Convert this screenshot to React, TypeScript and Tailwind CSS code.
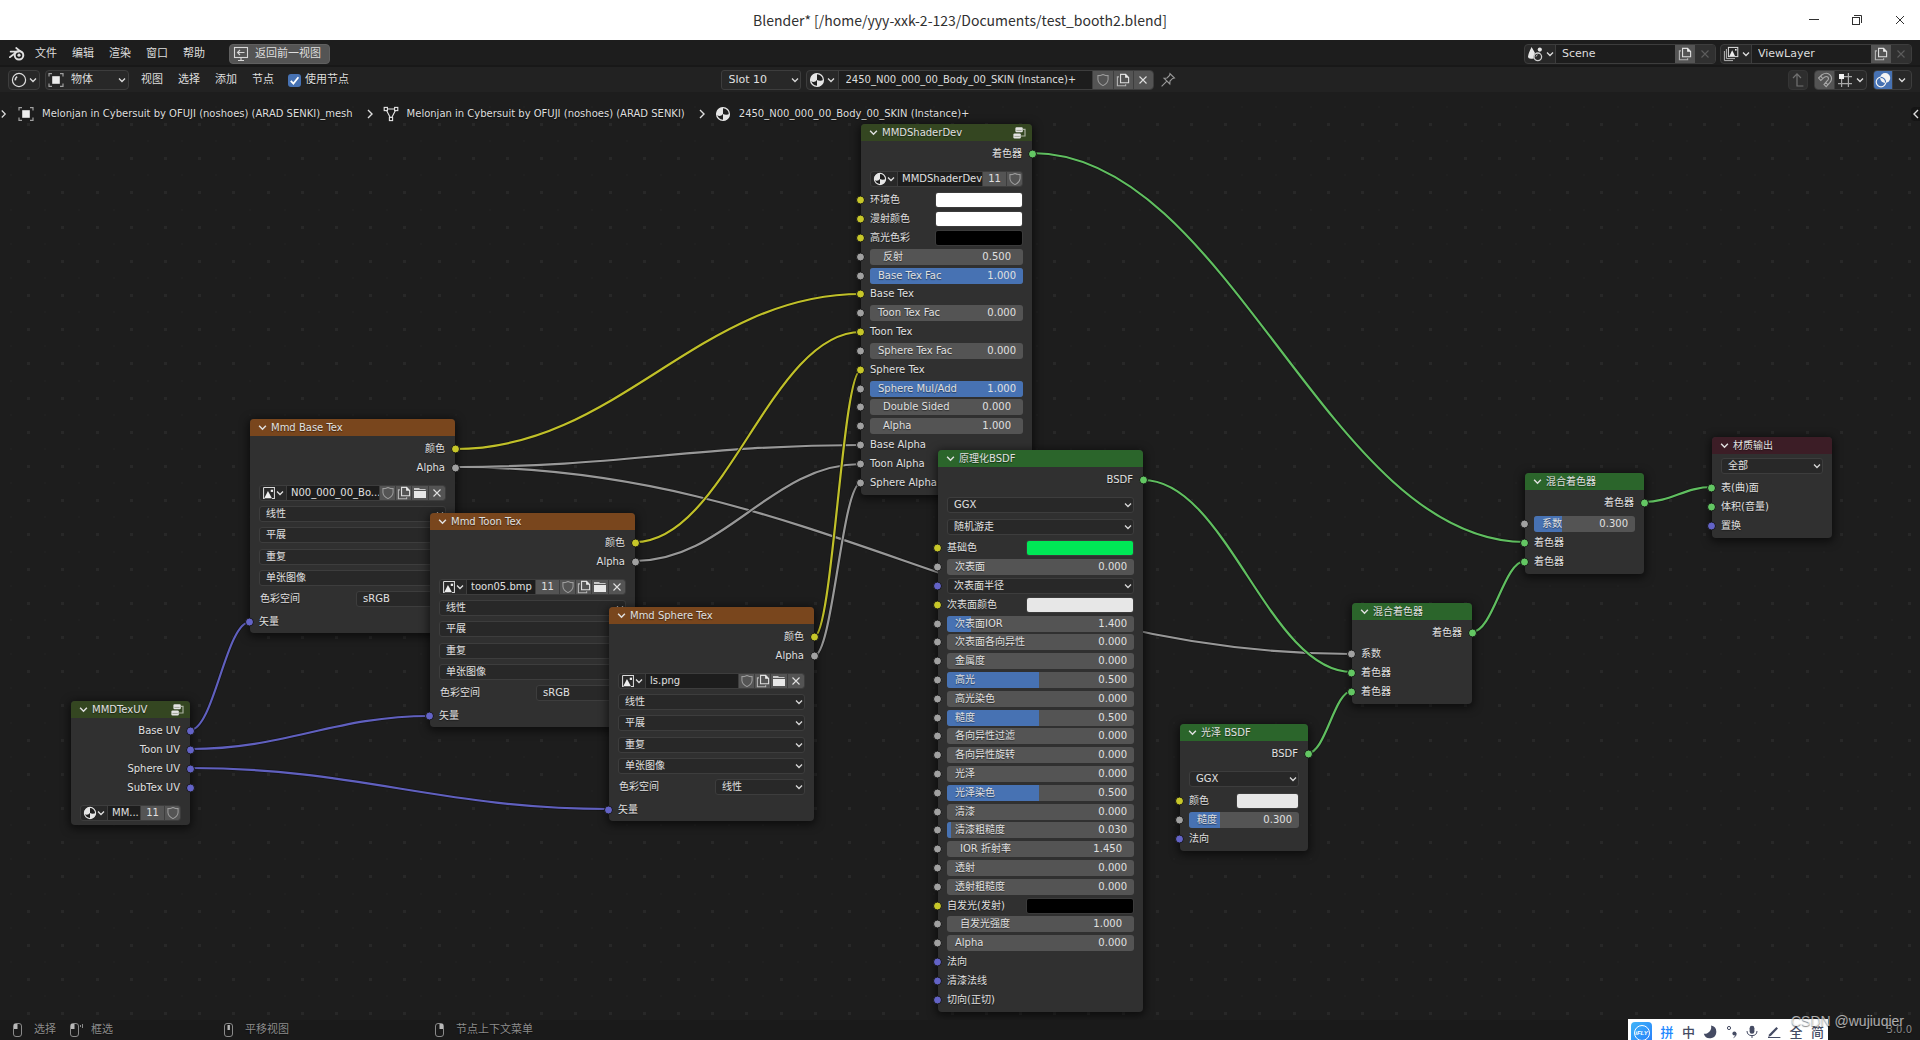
import React from 'react';

const SOCKET = {
  yellow: 'bg-[#c7c729]',
  grey: 'bg-[#a1a1a1]',
  violet: 'bg-[#6363c7]',
  green: 'bg-[#63c763]',
} as const;

const STROKE = {
  yellow: '#c0c029',
  grey: '#989898',
  violet: '#6060bf',
  green: '#60bf60',
} as const;

type Hue = keyof typeof SOCKET;

/* ---------- icons ---------- */

function Chevron({ className = 'w-2 h-2' }: { className?: string }) {
  return (
    <svg viewBox="0 0 8 8" className={className} fill="none" stroke="currentColor" strokeWidth="1.3" aria-hidden="true">
      <path d="M1 2.5 L4 5.5 L7 2.5" />
    </svg>
  );
}

function ChevronRight({ className = 'h-3 w-2' }: { className?: string }) {
  return (
    <svg viewBox="0 0 8 12" className={className} fill="none" stroke="currentColor" strokeWidth="1.4" aria-hidden="true">
      <path d="M2 2 L6 6 L2 10" />
    </svg>
  );
}

function BlenderLogo() {
  return (
    <svg viewBox="0 0 16 14" className="h-[14px] w-4" fill="none" stroke="#e0e0e0" aria-hidden="true">
      <circle cx="10" cy="8.2" r="4.3" strokeWidth="2" />
      <circle cx="10" cy="8.2" r="1.6" fill="#e0e0e0" stroke="none" />
      <path d="M7.2 1 L13.4 5.8 M1.6 4.6 H10 M0.8 10.2 L8 4.8" strokeWidth="1.7" strokeLinecap="round" />
    </svg>
  );
}

function BackIcon() {
  return (
    <svg viewBox="0 0 16 16" className="h-4 w-4" fill="none" stroke="#d8d8d8" strokeWidth="1.1" aria-hidden="true">
      <rect x="1.5" y="1.5" width="13" height="10" />
      <path d="M11.5 6.5 H4.5 M7 4 L4.5 6.5 L7 9 M8 12 V14.5 M5 14.5 H11" />
    </svg>
  );
}

function EditorBall() {
  return (
    <svg viewBox="0 0 16 16" className="h-4 w-4" fill="none" stroke="#dedede" strokeWidth="1.2" aria-hidden="true">
      <circle cx="8" cy="8" r="6.6" />
      <path d="M4.4 8.4 A3.8 3.8 0 0 1 6.2 4.6" strokeWidth="1.6" />
    </svg>
  );
}

function ObjectIcon() {
  return (
    <svg viewBox="0 0 16 16" className="h-4 w-4" fill="none" stroke="#a0a0a0" strokeWidth="1.2" aria-hidden="true">
      <rect x="4.2" y="4.2" width="7.6" height="7.6" fill="#eeeeee" stroke="none" />
      <path d="M1 4.5 V1.6 H4 M12 1.6 H15 V4.5 M15 11.5 V14.4 H12 M4 14.4 H1 V11.5" />
    </svg>
  );
}

function MeshIcon() {
  return (
    <svg viewBox="0 0 16 16" className="h-4 w-4" fill="none" stroke="#e6e6e6" strokeWidth="1.1" aria-hidden="true">
      <path d="M4.5 3 H11.5 M3.6 4.6 L7.2 11.5 M12.4 4.6 L8.8 11.5" />
      <rect x="1.2" y="1.4" width="3.2" height="3.2" />
      <rect x="11.6" y="1.4" width="3.2" height="3.2" />
      <rect x="6.4" y="11.4" width="3.2" height="3.2" />
    </svg>
  );
}

function MaterialIcon({ className = 'h-4 w-4' }: { className?: string }) {
  return (
    <svg viewBox="0 0 16 16" className={className} aria-hidden="true">
      <circle cx="8" cy="8" r="6.4" fill="#1f1f1f" stroke="#e6e6e6" strokeWidth="1.3" />
      <path d="M8 8 V1.4 A6.6 6.6 0 0 0 1.4 8 Q1.8 9.6 4 10 Q6.4 10.2 8 8 Z" fill="#e6e6e6" />
      <path d="M8 8 Q11 9.6 14.6 8 A6.6 6.6 0 0 1 8 14.6 Z" fill="#e6e6e6" />
    </svg>
  );
}

function ImageIcon({ className = 'h-4 w-4' }: { className?: string }) {
  return (
    <svg viewBox="0 0 16 16" className={className} aria-hidden="true">
      <path d="M1.8 1.8 H14.2 V14.2 H11.5 M1.8 1.8 V14.2 H3" fill="none" stroke="#d8d8d8" strokeWidth="1.2" />
      <path d="M2.6 14 L6.8 5.6 L11.4 14 Z" fill="#eeeeee" />
      <rect x="10" y="4.2" width="2.6" height="2.6" fill="#eeeeee" />
    </svg>
  );
}

function ShieldIcon() {
  return (
    <svg viewBox="0 0 16 16" className="h-[14px] w-[14px] shrink-0" fill="none" stroke="#9c9c9c" strokeWidth="1.2" aria-hidden="true">
      <path d="M8 1.6 Q5 3 2.2 3 V7.4 Q2.6 11.8 8 14.4 Q13.4 11.8 13.8 7.4 V3 Q11 3 8 1.6 Z" />
    </svg>
  );
}

function CopyIcon() {
  return (
    <svg viewBox="0 0 16 16" className="h-[14px] w-[14px] shrink-0" fill="none" stroke="#dddddd" strokeWidth="1.3" aria-hidden="true">
      <path d="M5.2 1.6 H11 L14.4 5 V11.2 H5.2 Z" />
      <path d="M10.4 1.2 V5.4 H14.8 Z" fill="#eeeeee" stroke="none" />
      <path d="M3.4 4.4 H1.6 V14.6 H11 V12.8" stroke="#b4b4b4" />
    </svg>
  );
}

function FolderIcon() {
  return (
    <svg viewBox="0 0 14 14" className="h-[14px] w-[14px] shrink-0" fill="#e8e8e8" aria-hidden="true">
      <path d="M1 4 V2 H6 L7 3 H12.6 V4 Z" fill="#c8c8c8" />
      <path d="M1 5 H13 V12 H1 Z" />
    </svg>
  );
}

function CrossIcon() {
  return (
    <svg viewBox="0 0 10 10" className="h-[10px] w-[10px] shrink-0" fill="none" stroke="currentColor" strokeWidth="1.1" aria-hidden="true">
      <path d="M1.5 1.5 L8.5 8.5 M8.5 1.5 L1.5 8.5" />
    </svg>
  );
}

function PinIcon() {
  return (
    <svg viewBox="0 0 16 16" className="h-4 w-4" fill="none" stroke="#9a9a9a" strokeWidth="1.1" aria-hidden="true">
      <path d="M10 1.6 L14.4 6 L12.6 6.4 L10 9 L9.8 12 L4 6.2 L7 6 L9.6 3.4 Z M6.6 9.4 L1.6 14.4" />
    </svg>
  );
}

function GroupIcon() {
  return (
    <svg viewBox="0 0 13 12" className="h-3 w-[13px]" fill="none" aria-hidden="true">
      <rect x="2.4" y="0.2" width="7.4" height="5" rx="1.2" fill="#e4e4e4" />
      <rect x="0.4" y="6.4" width="7.4" height="5" rx="1.2" fill="#e4e4e4" />
      <path d="M9.8 2.4 H12 V9 H7.8" stroke="#a9b09f" strokeWidth="1.2" />
      <path d="M3.4 3.4 H8.6 M1.4 9.4 H6.8" stroke="#8b9380" strokeWidth="0.8" />
    </svg>
  );
}

function SceneIcon() {
  return (
    <svg viewBox="0 0 16 16" className="h-4 w-4" aria-hidden="true">
      <path d="M4.6 1 L8 7 Q6.4 9.4 6.8 12.4 Q1.2 13.4 1 11 Q1 8 4.6 1 Z" fill="#e6e6e6" />
      <circle cx="12.8" cy="3.6" r="2.1" fill="#e6e6e6" />
      <circle cx="10.8" cy="10.8" r="3.8" fill="none" stroke="#cfcfcf" strokeWidth="1.3" />
      <path d="M9 10.6 A2 2 0 0 1 10.6 8.8" stroke="#cfcfcf" fill="none" />
    </svg>
  );
}

function LayersIcon() {
  return (
    <svg viewBox="0 0 16 16" className="h-4 w-4" fill="none" aria-hidden="true">
      <path d="M1.4 5 V14.6 H10 M3.4 3 V12.6 H12" stroke="#b4b4b4" />
      <rect x="5.4" y="1.4" width="9.4" height="9.2" stroke="#e0e0e0" />
      <path d="M6.4 10 L9.2 4.2 L12 10 Z" fill="#eeeeee" />
      <rect x="12" y="3" width="1.6" height="1.6" fill="#eeeeee" />
    </svg>
  );
}

function ParentIcon() {
  return (
    <svg viewBox="0 0 16 16" className="h-4 w-4" fill="none" stroke="#727272" strokeWidth="1.2" aria-hidden="true">
      <path d="M3 6 L7 1.8 L11 6 M7 2 V14 H13.4" />
    </svg>
  );
}

function MagnetIcon() {
  return (
    <svg viewBox="0 0 16 16" className="h-4 w-4" fill="none" stroke="#a8a8a8" strokeWidth="1.1" aria-hidden="true">
      <path d="M1.6 6 L5 2.8 Q9.8 -0.4 13.2 3.2 Q16 6.6 13 10.4 L9.2 14.6 L7 12.4 L10.8 8.2 Q12.2 6.4 10.8 5 Q9.4 3.8 7.4 5.2 L3.8 8.4 Z M3.6 4.2 L5.8 6.6 M8.6 10.4 L11 12.8" />
    </svg>
  );
}

function SnapGridIcon() {
  return (
    <svg viewBox="0 0 16 16" className="h-4 w-4" fill="none" stroke="#a8a8a8" strokeWidth="1.2" aria-hidden="true">
      <path d="M11.4 1 V15 M4.6 7 V15 M1 11.6 H15 M7 4.6 H15" />
      <rect x="2" y="2" width="5" height="5" fill="#f0f0f0" stroke="none" />
    </svg>
  );
}

function OverlayIcon() {
  return (
    <svg viewBox="0 0 16 16" className="h-4 w-4" fill="none" aria-hidden="true">
      <circle cx="10.2" cy="6" r="5" fill="#f4f4f4" />
      <circle cx="6" cy="10" r="4.8" stroke="#f4f4f4" strokeWidth="1.2" />
      <path d="M5.6 5.4 A4.8 4.8 0 0 1 10.6 10.4" stroke="#4772b3" strokeWidth="1.1" />
    </svg>
  );
}

function MouseIcon({ kind }: { kind: 'left' | 'drag' | 'middle' | 'right' }) {
  return (
    <svg viewBox="0 0 16 16" className="h-4 w-4" fill="none" stroke="#8a8a8a" aria-hidden="true">
      <rect x="3.5" y="1.5" width="8" height="13" rx="2.5" />
      {(kind === 'left' || kind === 'drag') && <path d="M4 2 H7.5 V7 H4 Z" fill="#b8b8b8" stroke="none" />}
      {kind === 'middle' && <rect x="6.5" y="3" width="2.4" height="5" fill="#b8b8b8" stroke="none" />}
      {kind === 'right' && <path d="M7.5 2 H11 V7 H7.5 Z" fill="#b8b8b8" stroke="none" />}
      {kind === 'drag' && <path d="M13.5 3 V5 M15.5 2 V6" />}
    </svg>
  );
}

/* ---------- controls ---------- */

function DropDown({ value, label, size = 'node', className = 'w-full' }: { value: string; label: string; size?: 'node' | 'bar'; className?: string }) {
  return (
    <div className={'relative ' + className}>
      <select
        aria-label={label}
        defaultValue={value}
        className={
          'block w-full appearance-none rounded-[3px] border border-[#3d3d3d] bg-[#282828] pr-4 text-[#e0e0e0] ' +
          (size === 'node' ? 'h-4 pl-[6px] leading-[14px]' : 'h-5 pl-[7px] leading-[18px]')
        }
      >
        <option>{value}</option>
      </select>
      <Chevron className="pointer-events-none absolute right-[2px] top-1/2 h-2 w-2 -translate-y-1/2 text-[#d8d8d8]" />
    </div>
  );
}

function NumberField({ name, value, fill, bounded = true }: { name: string; value: string; fill?: number; bounded?: boolean }) {
  return (
    <label
      className={
        'relative flex h-4 w-full items-center justify-between overflow-hidden rounded-[3px] bg-[#545454] ' +
        (bounded ? 'pl-2 pr-[7px]' : 'pl-[13px] pr-3')
      }
    >
      {fill !== undefined && <span className="absolute inset-y-0 left-0 bg-[#4772b3]" style={{ width: `${fill}%` }} />}
      <span className="relative whitespace-nowrap">{name}</span>
      <input type="text" defaultValue={value} className="relative h-[14px] w-10 bg-transparent text-right outline-none" />
    </label>
  );
}

type Input = {
  hue: Hue;
  name: string;
  value?: string;
  fill?: number;
  unbounded?: boolean;
  color?: string;
  select?: boolean;
};

function Socket({ hue, side }: { hue: Hue; side: 'left' | 'right' }) {
  return (
    <span
      className={
        'absolute top-1/2 h-[9px] w-[9px] -translate-y-1/2 rounded-full border border-[#181818] ' +
        SOCKET[hue] +
        (side === 'left' ? ' -left-[5px]' : ' -right-[5px]')
      }
    />
  );
}

function InputRow({ row }: { row: Input }) {
  let body: React.ReactNode = <span>{row.name}</span>;
  if (row.color) {
    body = (
      <label className="grid w-full grid-cols-[11fr_15fr] items-center">
        <span className="whitespace-nowrap">{row.name}</span>
        <input
          type="color"
          defaultValue={row.color}
          className="block h-4 w-full appearance-none overflow-hidden rounded-[3px] border border-[#3b3b3b] bg-transparent p-0 [&::-webkit-color-swatch-wrapper]:p-0 [&::-webkit-color-swatch]:border-0"
        />
      </label>
    );
  } else if (row.select) {
    body = <DropDown value={row.name} label={row.name} />;
  } else if (row.value) {
    body = <NumberField name={row.name} value={row.value} fill={row.fill} bounded={!row.unbounded} />;
  }
  return (
    <div className="relative flex items-center px-[9px]">
      <Socket hue={row.hue} side="left" />
      {body}
    </div>
  );
}

function Inputs({ rows, className }: { rows: Input[]; className: string }) {
  return (
    <div className={'grid auto-rows-fr ' + className}>
      {rows.map((row, i) => (
        <InputRow key={i} row={row} />
      ))}
    </div>
  );
}

function Outputs({ rows }: { rows: [string, Hue][] }) {
  return (
    <div className="pt-[3px]">
      {rows.map(([name, hue]) => (
        <div key={name} className="relative flex h-[19px] items-center justify-end pr-[10px]">
          {name}
          <Socket hue={hue} side="right" />
        </div>
      ))}
    </div>
  );
}

function IdButton({ label, className, children }: { label: string; className: string; children: React.ReactNode }) {
  return (
    <button type="button" aria-label={label} className={'flex shrink-0 items-center justify-center border-l border-[#3d3d3d] bg-[#545454] ' + className}>
      {children}
    </button>
  );
}

function NodeId({ icon, name, users, file = false }: { icon: React.ReactNode; name: string; users?: string; file?: boolean }) {
  return (
    <div className="mx-[9px] mt-2 flex h-4 overflow-hidden rounded-[3px] border border-[#3d3d3d] bg-[#282828]">
      <button type="button" aria-label="浏览" className="flex w-[26px] shrink-0 items-center justify-center">
        {icon}
        <Chevron className="h-2 w-2" />
      </button>
      <input
        type="text"
        aria-label="名称"
        defaultValue={name}
        className="w-0 min-w-0 flex-1 border-l border-[#3d3d3d] bg-[#1d1d1d] pl-1 outline-none"
      />
      {users && <IdButton label="用户数" className="w-6">{users}</IdButton>}
      <IdButton label="伪用户" className="w-4"><ShieldIcon /></IdButton>
      {file && (
        <>
          <IdButton label="新建" className="w-4"><CopyIcon /></IdButton>
          <IdButton label="打开" className="w-[17px]"><FolderIcon /></IdButton>
          <IdButton label="断开" className="w-[17px]"><CrossIcon /></IdButton>
        </>
      )}
    </div>
  );
}

function Node({ x, y, width, header, title, group = false, children }: {
  x: number;
  y: number;
  width: number;
  header: string;
  title: string;
  group?: boolean;
  children: React.ReactNode;
}) {
  return (
    <section
      aria-label={title}
      className="absolute rounded-[4px] bg-[#303030] shadow-[0_2px_8px_2px_rgba(0,0,0,0.55)]"
      style={{ left: x, top: y, width }}
    >
      <header className={'flex h-[17px] items-center gap-1 rounded-t-[4px] pl-2 pr-[6px] ' + header}>
        <button type="button" aria-label="折叠" className="flex shrink-0">
          <Chevron className="h-[9px] w-[9px]" />
        </button>
        <h2 className="flex-1 whitespace-nowrap">{title}</h2>
        {group && <GroupIcon />}
      </header>
      {children}
    </section>
  );
}

const TEXTURE = 'bg-[#79461d]';
const SHADER = 'bg-[#2b652b]';
const GROUP = 'bg-[#344621]';
const OUTPUT = 'bg-[#3c1d26]';

function TextureNode({ x, y, title, file, users, space }: { x: number; y: number; title: string; file: string; users?: string; space: string }) {
  return (
    <Node x={x} y={y} width={205} header={TEXTURE} title={title}>
      <Outputs rows={[['颜色', 'yellow'], ['Alpha', 'grey']]} />
      <NodeId icon={<ImageIcon className="h-[14px] w-[14px]" />} name={file} users={users} file />
      <div className="flex flex-col gap-[5px] px-[9px] pt-[5px]">
        <DropDown value="线性" label="插值" />
        <DropDown value="平展" label="投射" />
      </div>
      <div className="flex flex-col gap-[5px] px-[9px] pb-[5px] pt-[6px]">
        <DropDown value="重复" label="扩展" />
        <DropDown value="单张图像" label="源" />
        <div className="flex items-center justify-between">
          <span className="pl-px">色彩空间</span>
          <DropDown value={space} label="色彩空间" className="w-[90px]" />
        </div>
      </div>
      <Inputs rows={[{ hue: 'violet', name: '矢量' }]} className="mb-[2px] h-[19px]" />
    </Node>
  );
}

const TOON_INPUTS: Input[] = [
  { hue: 'yellow', name: '环境色', color: '#ffffff' },
  { hue: 'yellow', name: '漫射颜色', color: '#ffffff' },
  { hue: 'yellow', name: '高光色彩', color: '#000000' },
  { hue: 'grey', name: '反射', value: '0.500', unbounded: true },
  { hue: 'grey', name: 'Base Tex Fac', value: '1.000', fill: 100 },
  { hue: 'yellow', name: 'Base Tex' },
  { hue: 'grey', name: 'Toon Tex Fac', value: '0.000' },
  { hue: 'yellow', name: 'Toon Tex' },
  { hue: 'grey', name: 'Sphere Tex Fac', value: '0.000' },
  { hue: 'yellow', name: 'Sphere Tex' },
  { hue: 'grey', name: 'Sphere Mul/Add', value: '1.000', fill: 100 },
  { hue: 'grey', name: 'Double Sided', value: '0.000', unbounded: true },
  { hue: 'grey', name: 'Alpha', value: '1.000', unbounded: true },
  { hue: 'grey', name: 'Base Alpha' },
  { hue: 'grey', name: 'Toon Alpha' },
  { hue: 'grey', name: 'Sphere Alpha' },
];

const PRINCIPLED_INPUTS: Input[] = [
  { hue: 'yellow', name: '基础色', color: '#00e756' },
  { hue: 'grey', name: '次表面', value: '0.000' },
  { hue: 'violet', name: '次表面半径', select: true },
  { hue: 'yellow', name: '次表面颜色', color: '#e7e7e7' },
  { hue: 'grey', name: '次表面IOR', value: '1.400', fill: 13 },
  { hue: 'grey', name: '次表面各向异性', value: '0.000' },
  { hue: 'grey', name: '金属度', value: '0.000' },
  { hue: 'grey', name: '高光', value: '0.500', fill: 49 },
  { hue: 'grey', name: '高光染色', value: '0.000' },
  { hue: 'grey', name: '糙度', value: '0.500', fill: 49 },
  { hue: 'grey', name: '各向异性过滤', value: '0.000' },
  { hue: 'grey', name: '各向异性旋转', value: '0.000' },
  { hue: 'grey', name: '光泽', value: '0.000' },
  { hue: 'grey', name: '光泽染色', value: '0.500', fill: 49 },
  { hue: 'grey', name: '清漆', value: '0.000' },
  { hue: 'grey', name: '清漆粗糙度', value: '0.030', fill: 2 },
  { hue: 'grey', name: 'IOR 折射率', value: '1.450', unbounded: true },
  { hue: 'grey', name: '透射', value: '0.000' },
  { hue: 'grey', name: '透射粗糙度', value: '0.000' },
  { hue: 'yellow', name: '自发光(发射)', color: '#000000' },
  { hue: 'grey', name: '自发光强度', value: '1.000', unbounded: true },
  { hue: 'grey', name: 'Alpha', value: '0.000' },
  { hue: 'violet', name: '法向' },
  { hue: 'violet', name: '清漆法线' },
  { hue: 'violet', name: '切向(正切)' },
];

const LINKS: [number, number, number, number, Hue][] = [
  [190, 638, 250, 530, 'violet'],
  [190, 657, 430, 624, 'violet'],
  [190, 676, 609, 717, 'violet'],
  [455, 375, 1352, 562, 'grey'],
  [455, 375, 861, 353, 'grey'],
  [455, 357, 861, 202, 'yellow'],
  [635, 450, 861, 240, 'yellow'],
  [635, 469, 861, 372, 'grey'],
  [814, 545, 861, 278, 'yellow'],
  [814, 564, 861, 391, 'grey'],
  [1143, 388, 1352, 580, 'green'],
  [1308, 661, 1352, 599, 'green'],
  [1032, 61, 1525, 450, 'green'],
  [1472, 540, 1525, 469, 'green'],
  [1644, 410, 1712, 395, 'green'],
];

const CURVING = 0.4;

function Backdrop() {
  const dots: string[] = [];
  const faint: string[] = [];
  for (let j = 0; j < 28; j++) {
    for (let i = 0; i < 58; i++) {
      const x = Math.round(-7 + i * 34.2);
      const y = Math.round(31 + j * 34.2);
      dots.push(`M${x} ${y}h3v3h-3z`);
      faint.push(`M${x + 17} ${y - 17}h2v2h-2z`);
    }
  }
  return (
    <svg className="absolute inset-0 h-full w-full" aria-hidden="true">
      <path d={faint.join('')} fill="#202020" />
      <path d={dots.join('')} fill="#282828" />
      {LINKS.map(([x1, y1, x2, y2, hue], i) => {
        const h = Math.abs(x2 - x1) * CURVING;
        const d = `M${x1} ${y1} C${x1 + h} ${y1} ${x2 - h} ${y2} ${x2} ${y2}`;
        return (
          <g key={i} fill="none">
            <path d={d} stroke="#141414" strokeWidth="3.6" />
            <path d={d} stroke={STROKE[hue]} strokeWidth="2.2" />
          </g>
        );
      })}
    </svg>
  );
}

/* ---------- window bars ---------- */

function TitleBar() {
  return (
    <header className="grid h-10 shrink-0 grid-cols-[1fr_auto_1fr] items-center bg-white text-[#303030]">
      <span />
      <h1 className="font-['Noto_Sans_CJK_SC',sans-serif] text-[14px] leading-5">Blender* [/home/yyy-xxk-2-123/Documents/test_booth2.blend]</h1>
      <div className="flex items-center justify-end gap-[31px] pr-[14px]">
        <button type="button" aria-label="最小化">
          <svg viewBox="0 0 12 12" className="h-3 w-3" stroke="#303030"><path d="M1 5.5 H11" /></svg>
        </button>
        <button type="button" aria-label="还原">
          <svg viewBox="0 0 12 12" className="h-3 w-3" fill="none" stroke="#303030">
            <rect x="1.5" y="3.5" width="7" height="7" />
            <path d="M3 1.5 H10.5 V9" />
          </svg>
        </button>
        <button type="button" aria-label="关闭">
          <svg viewBox="0 0 12 12" className="h-3 w-3" stroke="#303030"><path d="M2 2 L10 10 M10 2 L2 10" /></svg>
        </button>
      </div>
    </header>
  );
}

function BarId({ icon, name }: { icon: React.ReactNode; name: string }) {
  return (
    <div className="flex h-5 overflow-hidden rounded-[4px] border border-[#3d3d3d] bg-[#282828]">
      <button type="button" aria-label="浏览" className="flex w-[30px] items-center justify-center gap-[3px] pl-px">
        {icon}
        <Chevron />
      </button>
      <input type="text" aria-label="名称" defaultValue={name} className="w-[120px] border-l border-[#3d3d3d] bg-[#1d1d1d] pl-[6px] outline-none" />
      <button type="button" aria-label="新建" className="flex w-5 items-center justify-center bg-[#545454]">
        <CopyIcon />
      </button>
      <button type="button" aria-label="移除" className="flex w-5 items-center justify-center bg-[#303030] text-[#5c5c5c]">
        <CrossIcon />
      </button>
    </div>
  );
}

function TopBar() {
  return (
    <nav className="flex h-[27px] shrink-0 items-center border-b-2 border-[#181818] bg-[#1d1d1d] pl-[9px] pr-2 pt-[2px]">
      <BlenderLogo />
      <div className="ml-[10px] flex items-center gap-[15px]">
        {['文件', '编辑', '渲染', '窗口', '帮助'].map((t) => (
          <button type="button" key={t}>{t}</button>
        ))}
      </div>
      <button type="button" className="ml-6 flex h-5 items-center gap-[6px] rounded-[4px] border border-[#606060] bg-[#545454] pl-[3px] pr-2">
        <BackIcon />
        返回前一视图
      </button>
      <div className="ml-auto flex gap-1">
        <BarId icon={<SceneIcon />} name="Scene" />
        <BarId icon={<LayersIcon />} name="ViewLayer" />
      </div>
    </nav>
  );
}

function EditorHeader() {
  return (
    <div className="flex h-[25px] shrink-0 items-center bg-[#222222] pl-2 pr-2 pt-px">
      <div className="flex flex-1 items-center">
        <button type="button" aria-label="编辑器类型" className="flex h-5 w-8 items-center justify-center gap-[2px] rounded-[4px] border border-[#3d3d3d] bg-[#282828]">
          <EditorBall />
          <Chevron />
        </button>
        <div className="relative ml-[5px] w-[84px]">
          <select
            aria-label="着色器类型"
            defaultValue="物体"
            className="block h-5 w-full appearance-none rounded-[4px] border border-[#3d3d3d] bg-[#282828] pl-[25px] leading-[18px]"
          >
            <option>物体</option>
          </select>
          <span className="pointer-events-none absolute left-[3px] top-[2px]"><ObjectIcon /></span>
          <Chevron className="pointer-events-none absolute right-[3px] top-[6px] h-2 w-2" />
        </div>
        <div className="ml-3 flex gap-[15px]">
          {['视图', '选择', '添加', '节点'].map((t) => (
            <button type="button" key={t}>{t}</button>
          ))}
        </div>
        <label className="ml-[14px] flex items-center gap-1 whitespace-nowrap">
          <span className="relative flex h-[13px] w-[13px]">
            <input type="checkbox" defaultChecked className="h-[13px] w-[13px] appearance-none rounded-[3px] bg-[#4772b3]" />
            <svg viewBox="0 0 13 13" className="pointer-events-none absolute inset-0" fill="none" stroke="white" strokeWidth="1.8" aria-hidden="true">
              <path d="M2.8 6.8 L5.4 9.6 L10.4 3.2" />
            </svg>
          </span>
          使用节点
        </label>
      </div>

      <div className="mr-6 flex items-center">
        <DropDown value="Slot 10" label="材质槽" size="bar" className="w-20" />
        <div className="ml-[5px] flex h-5 overflow-hidden rounded-[4px] border border-[#3d3d3d] bg-[#282828]">
          <button type="button" aria-label="浏览材质" className="flex w-[31px] items-center justify-center gap-[2px]">
            <MaterialIcon />
            <Chevron />
          </button>
          <input
            type="text"
            aria-label="材质名称"
            defaultValue="2450_N00_000_00_Body_00_SKIN (Instance)+"
            className="w-[254px] border-l border-[#3d3d3d] bg-[#1d1d1d] pl-[7px] text-[10px] outline-none"
          />
          <IdButton label="伪用户" className="w-[21px]"><ShieldIcon /></IdButton>
          <IdButton label="新建" className="w-5"><CopyIcon /></IdButton>
          <IdButton label="断开" className="w-5"><CrossIcon /></IdButton>
        </div>
        <button type="button" aria-label="固定" className="ml-[6px]"><PinIcon /></button>
      </div>

      <div className="flex flex-1 items-center justify-end gap-[6px]">
        <button type="button" aria-label="上一级" className="flex h-5 w-5 items-center justify-center rounded-[4px] border border-[#353535] bg-[#2e2e2e]">
          <ParentIcon />
        </button>
        <div className="flex h-5 overflow-hidden rounded-[4px] border border-[#3d3d3d] bg-[#282828]">
          <button type="button" aria-label="吸附" className="flex w-[19px] items-center justify-center bg-[#545454]"><MagnetIcon /></button>
          <button type="button" aria-label="吸附选项" className="flex w-8 items-center justify-center gap-[3px] border-l border-[#3d3d3d]">
            <SnapGridIcon />
            <Chevron />
          </button>
        </div>
        <div className="flex h-5 overflow-hidden rounded-[4px] border border-[#3d3d3d] bg-[#282828]">
          <button type="button" aria-label="叠加层" className="flex w-[18px] items-center justify-center bg-[#4772b3]"><OverlayIcon /></button>
          <button type="button" aria-label="叠加层选项" className="flex w-[19px] items-center justify-center border-l border-[#3d3d3d]"><Chevron /></button>
        </div>
      </div>
    </div>
  );
}

function Breadcrumb() {
  return (
    <div className="absolute inset-x-0 top-[11px] flex h-[22px] items-center whitespace-nowrap text-[10px]">
      <button type="button" aria-label="展开工具栏" className="flex h-[14px] w-[7px] items-center justify-center"><ChevronRight /></button>
      <span className="ml-[11px]"><ObjectIcon /></span>
      <span className="ml-2">Melonjan in Cybersuit by OFUJI (noshoes) (ARAD SENKI)_mesh</span>
      <span className="ml-[13px]"><ChevronRight /></span>
      <span className="ml-[9px]"><MeshIcon /></span>
      <span className="ml-2">Melonjan in Cybersuit by OFUJI (noshoes) (ARAD SENKI)</span>
      <span className="ml-[13px]"><ChevronRight /></span>
      <span className="ml-[9px]"><MaterialIcon /></span>
      <span className="ml-2">2450_N00_000_00_Body_00_SKIN (Instance)+</span>
      <button type="button" aria-label="展开侧栏" className="ml-auto flex h-[14px] w-[9px] items-center justify-center rounded-l bg-[#151515]">
        <ChevronRight className="h-3 w-2 rotate-180" />
      </button>
    </div>
  );
}

function Canvas() {
  return (
    <main className="relative min-h-0 flex-1 overflow-hidden bg-[#1d1d1d]">
      <Backdrop />
      <Breadcrumb />
      <div className="text-[10px] leading-[14px] text-[#e0e0e0]">
        <Node x={71} y={609} width={119} header={GROUP} title="MMDTexUV" group>
          <Outputs rows={[['Base UV', 'violet'], ['Toon UV', 'violet'], ['Sphere UV', 'violet'], ['SubTex UV', 'violet']]} />
          <div className="pb-1">
            <NodeId icon={<MaterialIcon className="h-[14px] w-[14px]" />} name="MM..." users="11" />
          </div>
        </Node>
        <TextureNode x={250} y={327} title="Mmd Base Tex" file="N00_000_00_Bo..." space="sRGB" />
        <TextureNode x={430} y={421} title="Mmd Toon Tex" file="toon05.bmp" users="11" space="sRGB" />
        <TextureNode x={609} y={515} title="Mmd Sphere Tex" file="ls.png" space="线性" />
        <Node x={861} y={32} width={171} header={GROUP} title="MMDShaderDev" group>
          <Outputs rows={[['着色器', 'green']]} />
          <NodeId icon={<MaterialIcon className="h-[14px] w-[14px]" />} name="MMDShaderDev" users="11" />
          <Inputs rows={TOON_INPUTS} className="mb-[3px] mt-1 h-[301px]" />
        </Node>
        <Node x={938} y={358} width={205} header={SHADER} title="原理化BSDF">
          <Outputs rows={[['BSDF', 'green']]} />
          <div className="mt-2 flex flex-col gap-[6px] px-[9px]">
            <DropDown value="GGX" label="分布" />
            <DropDown value="随机游走" label="次表面方法" />
          </div>
          <Inputs rows={PRINCIPLED_INPUTS} className="mb-[3px] mt-1 h-[470px]" />
        </Node>
        <Node x={1180} y={632} width={128} header={SHADER} title="光泽 BSDF">
          <Outputs rows={[['BSDF', 'green']]} />
          <div className="mt-2 px-[9px]">
            <DropDown value="GGX" label="分布" />
          </div>
          <Inputs
            rows={[
              { hue: 'yellow', name: '颜色', color: '#e7e7e7' },
              { hue: 'grey', name: '糙度', value: '0.300', fill: 28 },
              { hue: 'violet', name: '法向' },
            ]}
            className="mb-[3px] mt-1 h-[57px]"
          />
        </Node>
        <Node x={1352} y={511} width={120} header={SHADER} title="混合着色器">
          <Outputs rows={[['着色器', 'green']]} />
          <Inputs
            rows={[{ hue: 'grey', name: '系数' }, { hue: 'green', name: '着色器' }, { hue: 'green', name: '着色器' }]}
            className="mb-[3px] mt-[2px] h-[57px]"
          />
        </Node>
        <Node x={1525} y={381} width={119} header={SHADER} title="混合着色器">
          <Outputs rows={[['着色器', 'green']]} />
          <Inputs
            rows={[{ hue: 'grey', name: '系数', value: '0.300', fill: 28 }, { hue: 'green', name: '着色器' }, { hue: 'green', name: '着色器' }]}
            className="mb-[3px] mt-[2px] h-[57px]"
          />
        </Node>
        <Node x={1712} y={345} width={120} header={OUTPUT} title="材质输出">
          <div className="mt-1 px-[9px]">
            <DropDown value="全部" label="目标" />
          </div>
          <Inputs
            rows={[{ hue: 'green', name: '表(曲)面' }, { hue: 'green', name: '体积(音量)' }, { hue: 'violet', name: '置换' }]}
            className="mb-[3px] mt-1 h-[57px]"
          />
        </Node>
      </div>
    </main>
  );
}

function StatusBar() {
  return (
    <footer className="flex h-5 shrink-0 items-center bg-[#1a1a1a] pl-[10px] pr-2 text-[#8c8c8c]">
      <span className="flex items-center gap-2"><MouseIcon kind="left" />选择</span>
      <span className="ml-[11px] flex items-center gap-2"><MouseIcon kind="drag" />框选</span>
      <span className="ml-[108px] flex items-center gap-2"><MouseIcon kind="middle" />平移视图</span>
      <span className="ml-[143px] flex items-center gap-2"><MouseIcon kind="right" />节点上下文菜单</span>
      <span className="ml-auto text-[10px]">3.0.0</span>
    </footer>
  );
}

function ImeBar() {
  return (
    <div className="absolute bottom-0 right-[92px] flex h-[21px] w-[200px] items-start justify-between overflow-hidden bg-white pl-[3px] pr-1 pt-[3px] font-['Noto_Sans_CJK_SC',sans-serif] text-[13px] font-medium leading-[20px] text-[#454b63]">
      <span className="flex h-[21px] w-[21px] shrink-0 items-center justify-center rounded-[4px] bg-gradient-to-br from-[#3fb4f8] to-[#2a7dfa] text-white">
        <span className="flex h-4 w-4 items-center justify-center rounded-full border border-white font-['Liberation_Sans',sans-serif] text-[6px] font-bold italic leading-none">iFLY</span>
      </span>
      <span className="text-[#2088ff]">拼</span>
      <span>中</span>
      <svg viewBox="0 0 14 14" className="mt-[3px] h-[14px] w-[14px]" aria-hidden="true">
        <path d="M8 0.6 A6.4 6.4 0 1 1 0.8 8.8 A6.6 6.6 0 0 0 8 0.6 Z" fill="#454b63" />
      </svg>
      <svg viewBox="0 0 12 14" className="mt-[3px] h-[14px] w-3" fill="none" aria-hidden="true">
        <circle cx="3" cy="3" r="1.6" stroke="#454b63" />
        <circle cx="8.4" cy="8.6" r="2" fill="#454b63" />
        <path d="M10.2 8.6 Q10.2 11.6 7.6 12.6" stroke="#454b63" />
      </svg>
      <svg viewBox="0 0 12 14" className="mt-[3px] h-[14px] w-3" fill="none" stroke="#454b63" aria-hidden="true">
        <rect x="3.6" y="0.8" width="4.8" height="8" rx="2.4" fill="#454b63" stroke="none" />
        <path d="M1 6 Q1.2 10.6 6 10.6 Q10.8 10.6 11 6 M6 10.6 V13" />
      </svg>
      <svg viewBox="0 0 14 14" className="mt-[3px] h-[14px] w-[14px]" fill="none" aria-hidden="true">
        <path d="M2 9.6 L9.4 2 L11 3.6 L4 10.8 L1.4 12 Z" fill="#454b63" />
        <path d="M1 12.5 H13.4" stroke="#454b63" />
      </svg>
      <span>全</span>
      <span>简</span>
    </div>
  );
}

export default function App() {
  return (
    <div className="relative flex h-screen w-full flex-col overflow-hidden bg-[#1d1d1d] font-['DejaVu_Sans','Noto_Sans_CJK_SC',sans-serif] text-[11px] leading-4 text-[#dedede] [text-shadow:0_1px_1px_rgba(0,0,0,0.5)]">
      <div className="contents [&_h1]:[text-shadow:none]">
        <TitleBar />
      </div>
      <TopBar />
      <EditorHeader />
      <Canvas />
      <StatusBar />
      <div className="contents [&>div]:[text-shadow:none]">
        <ImeBar />
      </div>
      <span className="absolute bottom-[10px] right-4 font-['Liberation_Sans',sans-serif] text-[14px] leading-[18px] text-white/65">CSDN @wujiuqier</span>
    </div>
  );
}
